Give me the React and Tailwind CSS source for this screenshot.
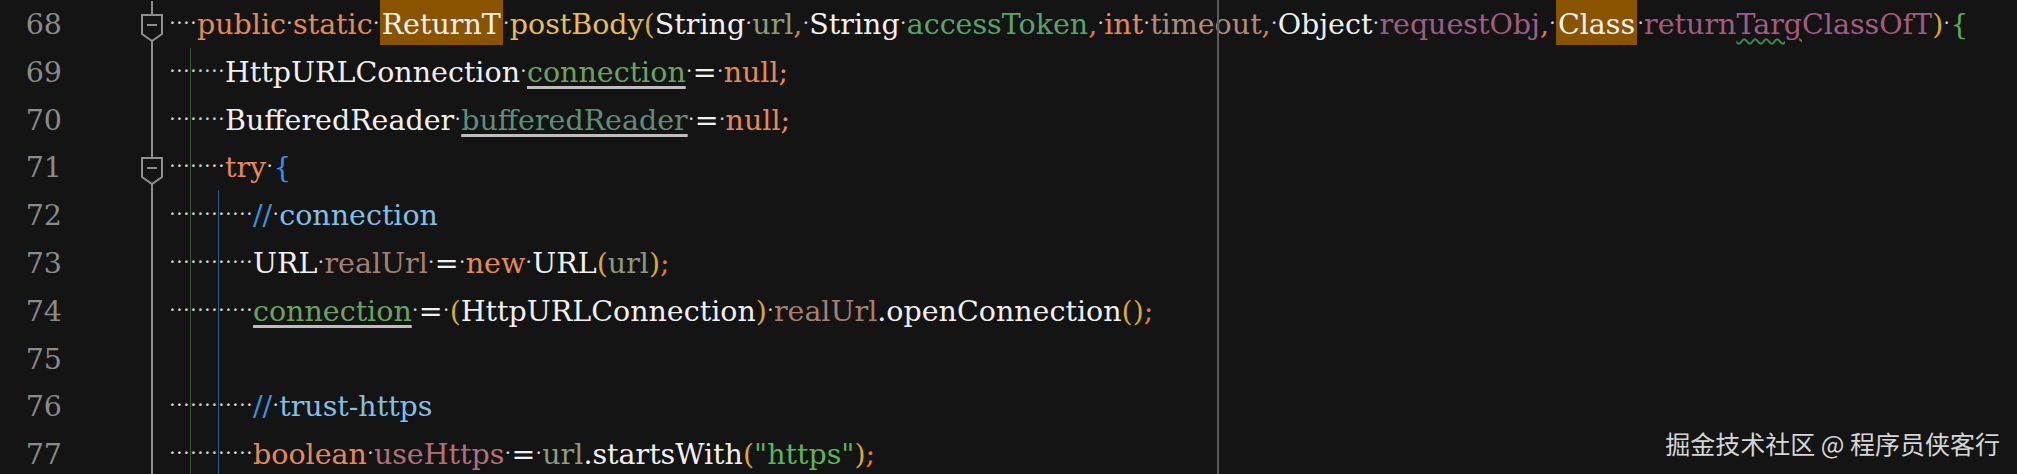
import React from 'react';

// colour tokens, picked from the editor theme in the screenshot
const C = {
  kw: 'text-[#e48a57]',
  punc: 'text-[#e27b3c]',
  type: 'text-[#f0f0f0]',
  method: 'text-[#e6be58]',
  paren: 'text-[#d9a938]',
  param: 'text-[#8d9a7b]',
  token: 'text-[#58a36d]',
  tan: 'text-[#b08b7b]',
  mauve: 'text-[#a05c82]',
  brace: 'text-[#5aac5a]',
  local: 'text-[#6ba35e]',
  teal: 'text-[#5e8e7c]',
  blue: 'text-[#3c8ee0]',
  slash: 'text-[#3d93dc]',
  comment: 'text-[#82bfe6]',
  realUrl: 'text-[#a77f72]',
  pink: 'text-[#b2707a]',
  str: 'text-[#5cb55a]',
};

const S = [' '];

const lines = [
  {
    n: 68, indent: 4, fold: true,
    segs: [
      ['public', C.kw], S, ['static', C.kw], S, ['ReturnT', C.type, 'hl'], S, ['postBody', C.method], ['(', C.paren],
      ['String', C.type], S, ['url', C.param], [',', C.punc], S, ['String', C.type], S, ['accessToken', C.token], [',', C.punc], S,
      ['int', C.kw], S, ['timeout', C.tan], [',', C.punc], S, ['Object', C.type], S, ['requestObj', C.mauve], [',', C.punc], S,
      ['Class', C.type, 'hl'], S, ['return', C.mauve], ['Targ', C.mauve, 'squig'], ['ClassOfT', C.mauve], [')', C.paren], S, ['{', C.brace],
    ],
  },
  {
    n: 69, indent: 8,
    segs: [['HttpURLConnection', C.type], S, ['connection', C.local, 'u'], S, ['=', C.type], S, ['null;', C.kw]],
  },
  {
    n: 70, indent: 8,
    segs: [['BufferedReader', C.type], S, ['bufferedReader', C.teal, 'u'], S, ['=', C.type], S, ['null;', C.kw]],
  },
  { n: 71, indent: 8, fold: true, segs: [['try', C.kw], S, ['{', C.blue]] },
  { n: 72, indent: 12, segs: [['//', C.slash], S, ['connection', C.comment]] },
  {
    n: 73, indent: 12,
    segs: [['URL', C.type], S, ['realUrl', C.realUrl], S, ['=', C.type], S, ['new', C.kw], S, ['URL', C.type], ['(', C.paren], ['url', C.param], [')', C.paren], [';', C.punc]],
  },
  {
    n: 74, indent: 12,
    segs: [['connection', C.local, 'u'], S, ['=', C.type], S, ['(', C.paren], ['HttpURLConnection', C.type], [')', C.paren], S, ['realUrl', C.realUrl], ['.openConnection', C.type], ['()', C.paren], [';', C.punc]],
  },
  { n: 75, indent: 0, segs: [] },
  { n: 76, indent: 12, segs: [['//', C.slash], S, ['trust-https', C.comment]] },
  {
    n: 77, indent: 12,
    segs: [['boolean', C.kw], S, ['useHttps', C.pink], S, ['=', C.type], S, ['url', C.param], ['.startsWith', C.type], ['(', C.paren], ['"https"', C.str], [')', C.paren], [';', C.punc]],
  },
];

function Dot() {
  return <span className="inline-block w-[7px] text-center text-[#d4d4d4] text-[20px] relative -top-[4px]">·</span>;
}

function Seg({ seg }) {
  const [text, color, flag] = seg;
  if (text === ' ') return <Dot />;
  if (flag === 'hl') {
    return <span className={`${color} bg-[#8a5300] pt-[9px] pb-[4px] px-[2px]`}>{text}</span>;
  }
  if (flag === 'u') {
    return <span className={`${color} underline decoration-[#bdbdbd] decoration-[3px] underline-offset-[4px]`}>{text}</span>;
  }
  if (flag === 'squig') {
    return <span className={`${color} underline decoration-wavy decoration-[#3f8a55] decoration-[1.5px] underline-offset-[4px]`}>{text}</span>;
  }
  return <span className={color}>{text}</span>;
}

function FoldIcon() {
  return (
    <svg width="24" height="30" viewBox="0 0 24 30" className="absolute left-0 top-[12px]">
      <path d="M2 2 H22 V21 L12 28 L2 21 Z" fill="#141414" stroke="#8f8f8f" strokeWidth="2" />
      <path d="M7 12 H17" stroke="#8f8f8f" strokeWidth="2" />
    </svg>
  );
}

export default function App() {
  return (
    <div className="w-[2017px] h-[474px] bg-[#141414] overflow-hidden relative pt-[1px] font-['DejaVu_Serif',serif] text-[28.5px]">
      {/* indent guides + ruler, drawn over the whitespace dots */}
      <div className="absolute left-[190px] top-[48px] bottom-0 w-[1px] bg-[#3b5a3a]" />
      <div className="absolute left-[218px] top-[190px] bottom-0 w-[1px] bg-[#2e5a88]" />
      <div className="absolute left-[1217px] top-0 bottom-0 w-[2px] bg-[#5c5c5c]" />

      {lines.map((line) => (
        <div key={line.n} className="flex h-[47.8px] leading-[47.8px] whitespace-pre">
          <div className="w-[62px] text-right text-[#8b8b8b]">{line.n}</div>
          <div className="w-[24px] ml-[78px] mr-[5px] relative flex justify-center">
            <div className="w-[2px] h-full bg-[#8f8f8f]" />
            {line.fold && <FoldIcon />}
          </div>
          <div className="flex-1">
            {Array.from({ length: line.indent }).map((_, i) => (
              <Dot key={i} />
            ))}
            {line.segs.map((s, i) => (
              <Seg key={i} seg={s} />
            ))}
          </div>
        </div>
      ))}

      <div className="absolute right-[17px] top-[426px] text-[25px] leading-[34px] text-[#d6d6d6] font-['Noto_Sans_CJK_SC','Noto_Sans',sans-serif]">
        掘金技术社区 @ 程序员侠客行
      </div>
    </div>
  );
}
